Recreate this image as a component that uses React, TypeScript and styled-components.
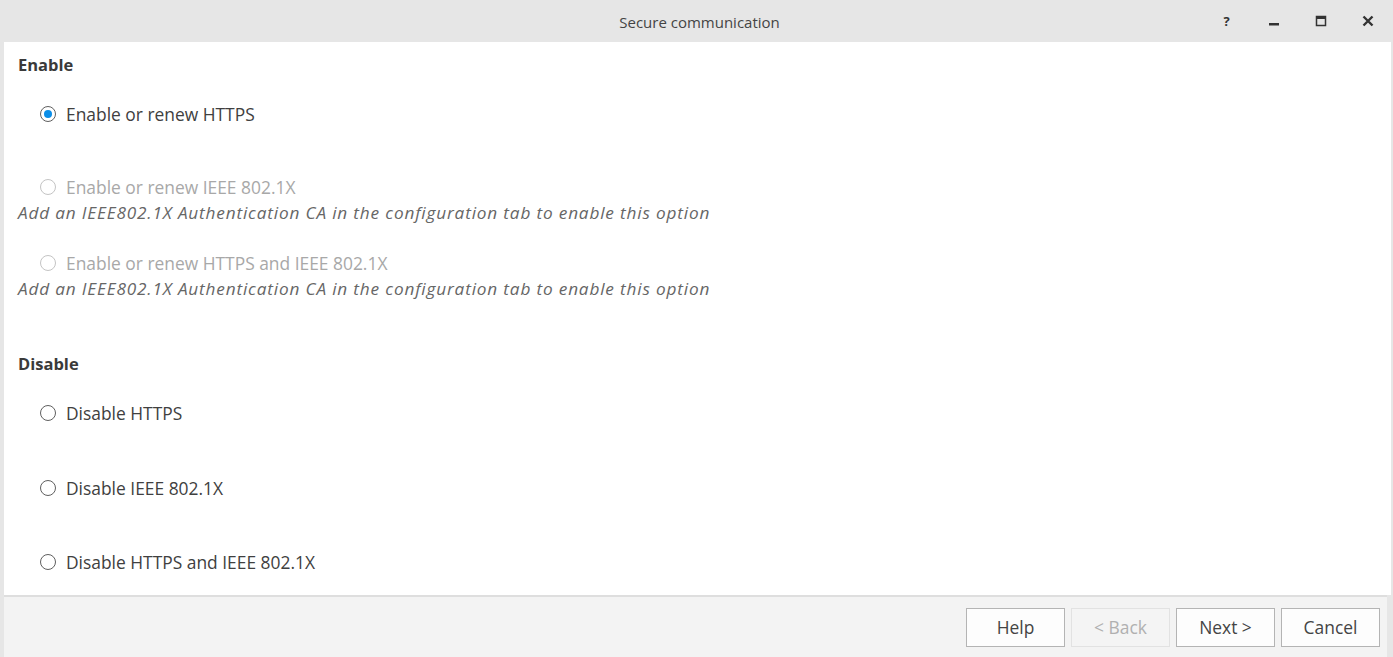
import React from "react";
import styled, { createGlobalStyle } from "styled-components";

const Global = createGlobalStyle`
  html, body { margin: 0; padding: 0; background: #e6e6e6; }
  body { font-family: "Open Sans", "Noto Sans", sans-serif; color: #333; }
  * { box-sizing: border-box; }
`;

const Window = styled.div`
  width: 1393px;
  height: 657px;
  display: flex;
  flex-direction: column;
  background: #e6e6e6;
  padding: 0 2px 0 4px;
`;

const TitleBar = styled.div`
  height: 42px;
  flex: none;
  display: grid;
  grid-template-columns: 1fr auto 1fr;
  align-items: center;
  margin-left: -4px;
  margin-right: -2px;
`;

const Title = styled.div`
  grid-column: 2;
  font-size: 15px;
  color: #444;
  padding-left: 6px;
  padding-top: 2px;
`;

const Controls = styled.div`
  grid-column: 3;
  justify-self: end;
  display: flex;
  align-items: center;
  height: 100%;
  padding-right: 2px;
`;

const Ctrl = styled.div`
  width: 47px;
  height: 100%;
  display: flex;
  align-items: center;
  justify-content: center;
  color: #333;
  font-weight: 700;
  font-size: 13px;
`;

const Body = styled.div`
  flex: 1;
  background: #fff;
  padding: 10px 14px 0 14px;
  display: flex;
  flex-direction: column;
`;

const Heading = styled.div<{ $mb: number }>`
  font-weight: 700;
  font-size: 16.5px;
  line-height: 26px;
  color: #3a3a3a;
  margin-bottom: ${(p) => p.$mb}px;
`;

const Option = styled.div<{ $mb: number }>`
  display: flex;
  flex-direction: column;
  margin-bottom: ${(p) => p.$mb}px;
`;

const OptionLine = styled.label<{ $disabled?: boolean }>`
  display: flex;
  align-items: center;
  height: 26px;
  padding-left: 22px;
  gap: 10px;
  font-size: 17.4px;
  color: ${(p) => (p.$disabled ? "#a8a8a8" : "#404040")};
`;

const Radio = styled.span<{ $checked?: boolean; $disabled?: boolean }>`
  width: 16px;
  height: 16px;
  border-radius: 50%;
  border: 1.4px solid ${(p) => (p.$disabled ? "#c4c4c4" : "#5f5f5f")};
  display: flex;
  align-items: center;
  justify-content: center;
  flex: none;
  &::after {
    content: "";
    display: ${(p) => (p.$checked ? "block" : "none")};
    width: 8px;
    height: 8px;
    border-radius: 50%;
    background: #0b8ee8;
  }
`;

const Hint = styled.div`
  font-style: italic;
  font-size: 17.2px;
  letter-spacing: 0.83px;
  line-height: 26px;
  color: #666;
`;

const Footer = styled.div`
  height: 62px;
  flex: none;
  background: #f3f3f3;
  border-top: 2px solid #dedede;
  display: flex;
  align-items: center;
  justify-content: flex-end;
  gap: 6px;
  padding-right: 7px;
  margin-right: 4px;
`;

const Button = styled.button<{ $disabled?: boolean }>`
  width: 99px;
  height: 39px;
  font-family: inherit;
  font-size: 17.4px;
  background: ${(p) => (p.$disabled ? "#f4f4f4" : "#fdfdfd")};
  border: 1px solid ${(p) => (p.$disabled ? "#e2e2e2" : "#b4b4b4")};
  color: ${(p) => (p.$disabled ? "#b0b0b0" : "#444")};
  padding: 0;
`;

export default function App() {
  return (
    <>
      <Global />
      <Window>
        <TitleBar>
          <Title>Secure communication</Title>
          <Controls>
            <Ctrl>?</Ctrl>
            <Ctrl>
              <svg width="12" height="12" viewBox="0 0 12 12">
                <rect x="1" y="8" width="10" height="2.5" fill="#333" />
              </svg>
            </Ctrl>
            <Ctrl>
              <svg width="12" height="12" viewBox="0 0 12 12">
                <rect x="1.5" y="1.5" width="9" height="9" fill="none" stroke="#333" strokeWidth="1.5" />
                <rect x="1.5" y="1.5" width="9" height="2.5" fill="#333" />
              </svg>
            </Ctrl>
            <Ctrl>
              <svg width="12" height="12" viewBox="0 0 12 12">
                <path d="M1.5 1.5 L10.5 10.5 M10.5 1.5 L1.5 10.5" stroke="#333" strokeWidth="2.4" />
              </svg>
            </Ctrl>
          </Controls>
        </TitleBar>
        <Body>
          <Heading $mb={23}>Enable</Heading>
          <Option $mb={47}>
            <OptionLine>
              <Radio $checked />
              Enable or renew HTTPS
            </OptionLine>
          </Option>
          <Option $mb={24}>
            <OptionLine $disabled>
              <Radio $disabled />
              Enable or renew IEEE 802.1X
            </OptionLine>
            <Hint>Add an IEEE802.1X Authentication CA in the configuration tab to enable this option</Hint>
          </Option>
          <Option $mb={49}>
            <OptionLine $disabled>
              <Radio $disabled />
              Enable or renew HTTPS and IEEE 802.1X
            </OptionLine>
            <Hint>Add an IEEE802.1X Authentication CA in the configuration tab to enable this option</Hint>
          </Option>
          <Heading $mb={23}>Disable</Heading>
          <Option $mb={49}>
            <OptionLine>
              <Radio />
              Disable HTTPS
            </OptionLine>
          </Option>
          <Option $mb={48}>
            <OptionLine>
              <Radio />
              Disable IEEE 802.1X
            </OptionLine>
          </Option>
          <Option $mb={0}>
            <OptionLine>
              <Radio />
              Disable HTTPS and IEEE 802.1X
            </OptionLine>
          </Option>
        </Body>
        <Footer>
          <Button>Help</Button>
          <Button $disabled>&lt; Back</Button>
          <Button>Next &gt;</Button>
          <Button>Cancel</Button>
        </Footer>
      </Window>
    </>
  );
}
